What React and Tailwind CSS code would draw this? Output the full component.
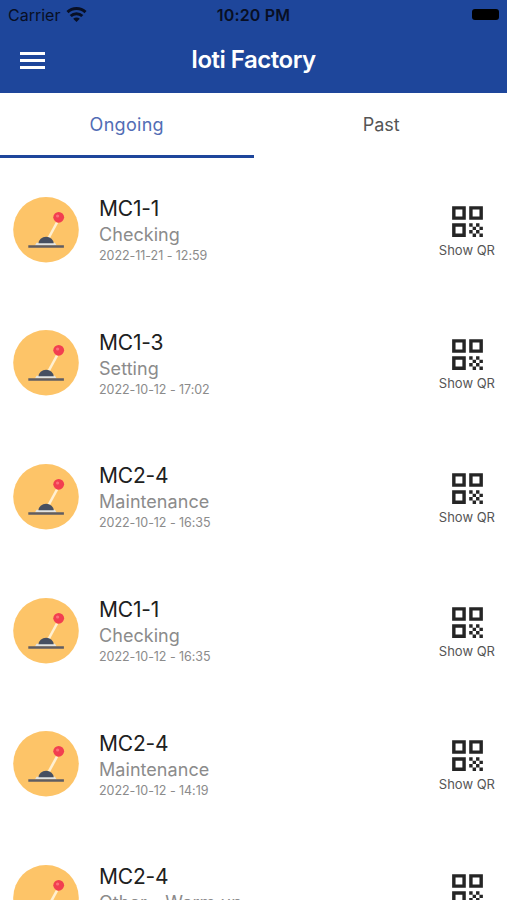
import { MdQrCode } from 'react-icons/md'

const jobs = [
  { id: 1, machine: 'MC1-1', status: 'Checking', date: '2022-11-21 - 12:59' },
  { id: 2, machine: 'MC1-3', status: 'Setting', date: '2022-10-12 - 17:02' },
  { id: 3, machine: 'MC2-4', status: 'Maintenance', date: '2022-10-12 - 16:35' },
  { id: 4, machine: 'MC1-1', status: 'Checking', date: '2022-10-12 - 16:35' },
  { id: 5, machine: 'MC2-4', status: 'Maintenance', date: '2022-10-12 - 14:19' },
  { id: 6, machine: 'MC2-4', status: 'Other - Warm up', date: '2022-10-12 - 14:02' },
]

function WifiIcon() {
  return (
    <svg width="21" height="15" viewBox="0 0 20 15" fill="none" stroke="#080f24" strokeWidth="3">
      <path d="M1 5.2C6 .4 14 .4 19 5.2" />
      <path d="M4.2 9c3.3-3.1 8.3-3.1 11.6 0" />
      <path d="M10 15 6.7 11.7c1.8-1.7 4.8-1.7 6.6 0z" fill="#080f24" stroke="none" />
    </svg>
  )
}

function LeverIcon() {
  return (
    <svg width="66" height="66" viewBox="0 0 66 66" className="shrink-0">
      <circle cx="33" cy="32.8" r="32.8" fill="#fdc468" />
      <path d="M34.5 43 44 25.5" stroke="#fff0d2" strokeWidth="2.6" />
      <circle cx="45.7" cy="20.3" r="5.4" fill="#f23e50" />
      <circle cx="44.6" cy="19" r="1.6" fill="#fb7078" />
      <path d="M23.5 45.8h18.5l1.5 2.7H22z" fill="#e3e4e2" />
      <path d="M25.5 46.3a7.6 6.6 0 0 1 15.2 0z" fill="#464f61" />
      <path d="M15.3 48.3h35.6v2.4H15.3z" fill="#5f5d62" />
    </svg>
  )
}

function JobRow({ job }) {
  return (
    <li className="flex h-[133.6px] items-center pl-[13px] pr-3">
      <LeverIcon />
      <div className="ml-5 flex-1 whitespace-nowrap">
        <p className="text-[21px] leading-[28px] tracking-[-0.2px] text-[#202020]">{job.machine}</p>
        <p className="text-[18px] leading-[24px] tracking-[0.05px] text-[#8b8b8b]">{job.status}</p>
        <p className="text-[12.5px] leading-[17px] tracking-[-0.05px] text-[#8b8b8b]">{job.date}</p>
      </div>
      <button type="button" className="flex flex-col items-center whitespace-nowrap">
        <MdQrCode size={41} className="-mb-px ml-0.5 text-[#252525]" />
        <span className="text-[13px] leading-[18px] text-[#555]">Show QR</span>
      </button>
    </li>
  )
}

export default function App() {
  return (
    <div className="h-[900px] overflow-hidden bg-white font-['Inter',sans-serif]">
      <header className="h-[93px] bg-[#1e469b]">
        <div className="grid h-[29px] grid-cols-[1fr_auto_1fr] items-center pl-2 pr-2 text-[#080f24]">
          <div className="flex items-center gap-1.5 text-[16px]">
            Carrier
            <WifiIcon />
          </div>
          <span className="text-center text-[16px] font-semibold tracking-[0.2px]">10:20 PM</span>
          <div className="flex justify-end">
            <span className="h-[11px] w-[27px] rounded-[3px] bg-black" />
          </div>
        </div>
        <div className="grid h-[62px] grid-cols-[60px_1fr_60px] items-center">
          <button type="button" aria-label="Menu" className="ml-5 flex w-[25px] flex-col gap-1">
            <span className="h-[3px] bg-white" />
            <span className="h-[3px] bg-white" />
            <span className="h-[3px] bg-white" />
          </button>
          <h1 className="text-center text-[24px] font-semibold tracking-[-0.5px] text-white">Ioti Factory</h1>
        </div>
      </header>

      <nav className="grid h-[65px] grid-cols-2 text-[18px]">
        <button type="button" className="border-b-[3px] border-[#1e469b] tracking-[0.3px] text-[#526db5]">
          Ongoing
        </button>
        <button type="button" className="border-b-[3px] border-transparent pl-0.5 text-[#555]">
          Past
        </button>
      </nav>

      <ul className="pt-[5px]">
        {jobs.map((job) => (
          <JobRow key={job.id} job={job} />
        ))}
      </ul>
    </div>
  )
}
